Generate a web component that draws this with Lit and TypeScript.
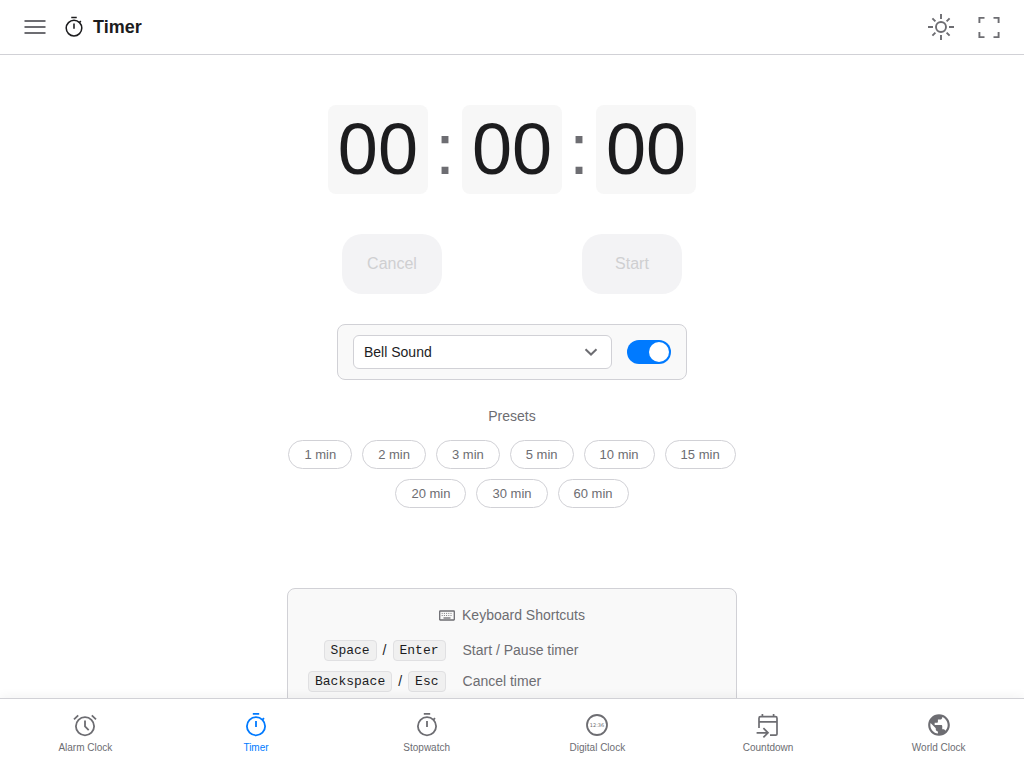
import { LitElement, html, css, svg } from "lit";
import { customElement, state } from "lit/decorators.js";
import { classMap } from "lit/directives/class-map.js";

const stopwatchIcon = svg`
  <g fill="none" stroke="currentColor" stroke-width="1.8">
    <circle cx="14" cy="15.3" r="9.1"></circle>
    <path d="M10.8 2.9h6.4M14 10v6M20.3 8.8l1.7-1.7"></path>
  </g>`;

const alarmIcon = svg`
  <g fill="none" stroke="currentColor" stroke-width="1.8">
    <circle cx="14" cy="15.2" r="9.1"></circle>
    <path d="M14 9.6v5.8l3.7 3.7M3 8.3l4.2-4M25 8.3l-4.2-4"></path>
  </g>`;

const digitalIcon = svg`
  <circle cx="14" cy="14" r="10" fill="none" stroke="currentColor" stroke-width="1.8"></circle>
  <text class="tiny" x="14" y="16" text-anchor="middle" fill="currentColor">12:36</text>`;

const countdownIcon = svg`
  <g fill="none" stroke="currentColor" stroke-width="1.7">
    <path d="M5 17V7.2q0-1.5 1.5-1.5h15q1.5 0 1.5 1.5V23q0 1.2-1.2 1.2H16M5 10.8h18M8.4 3v3M19.6 3v3M2.6 21.8h11.2M9.4 17.2l4.6 4.6-4.6 4.6"></path>
  </g>`;

const worldIcon = svg`
  <path fill="currentColor" transform="translate(1 1) scale(1.083)" d="M12 2C6.48 2 2 6.48 2 12s4.48 10 10 10 10-4.48 10-10S17.52 2 12 2zm-1 17.93c-3.95-.49-7-3.85-7-7.93 0-.62.08-1.21.21-1.79L9 15v1c0 1.1.9 2 2 2v1.93zm6.9-2.54c-.26-.81-1-1.39-1.9-1.39h-1v-3c0-.55-.45-1-1-1H8v-2h2c.55 0 1-.45 1-1V7h2c1.1 0 2-.9 2-2v-.41c2.93 1.19 5 4.06 5 7.41 0 2.08-.8 3.97-2.1 5.39z"></path>`;

const tabs = [
  { label: "Alarm Clock", icon: alarmIcon },
  { label: "Timer", icon: stopwatchIcon },
  { label: "Stopwatch", icon: stopwatchIcon },
  { label: "Digital Clock", icon: digitalIcon },
  { label: "Countdown", icon: countdownIcon },
  { label: "World Clock", icon: worldIcon },
];

const presets = [1, 2, 3, 5, 10, 15, 20, 30, 60];

@customElement("app-root")
export class AppRoot extends LitElement {
  @state() private seconds = 0;

  static styles = css`
    :host {
      display: flex;
      flex-direction: column;
      height: 100vh;
      background: #fff;
      color: #1c1c1e;
      font-family: "Liberation Sans", Arial, sans-serif;
      font-size: 14px;
    }
    * { box-sizing: border-box; }
    svg { display: block; }
    button, select { font-family: inherit; }
    header {
      display: flex;
      align-items: center;
      justify-content: space-between;
      height: 55px;
      flex: none;
      padding: 0 20px;
      border-bottom: 1px solid #d1d1d6;
    }
    .group { display: flex; align-items: center; gap: 12px; }
    .tools { gap: 18px; }
    .icon-button {
      border: 0;
      padding: 0;
      background: none;
      color: #6d6d72;
      cursor: pointer;
    }
    .title {
      display: flex;
      align-items: center;
      gap: 7px;
      margin: 0;
      font-size: 18px;
      line-height: 24px;
    }
    main {
      flex: 1;
      min-height: 0;
      overflow-y: auto;
      scrollbar-width: none;
      display: flex;
      flex-direction: column;
      align-items: center;
      padding: 50px 20px 40px;
    }
    main > * { flex: none; }
    .display {
      display: flex;
      font-size: 72px;
      line-height: 79px;
    }
    .digits {
      padding: 5px 10px;
      border-radius: 8px;
      background: #f7f7f7;
    }
    .colon { padding: 5px 7px; color: #6d6d72; }
    .actions { display: flex; gap: 140px; margin-top: 40px; }
    .action {
      width: 100px;
      height: 60px;
      border: 0;
      border-radius: 20px;
      background: #f3f3f5;
      color: #cfcfd1;
      font-size: 16px;
    }
    .sound {
      display: flex;
      align-items: center;
      gap: 15px;
      width: 100%;
      max-width: 350px;
      margin-top: 30px;
      padding: 10px 15px;
      border: 1px solid #d1d1d6;
      border-radius: 8px;
      background: #f9f9f9;
    }
    .select-box { flex: 1; display: grid; align-items: center; }
    .select-box > * { grid-area: 1 / 1; }
    .select {
      width: 100%;
      height: 34px;
      appearance: none;
      padding: 0 10px;
      border: 1px solid #d1d1d6;
      border-radius: 6px;
      background: #fff;
      color: #1c1c1e;
      font-size: 14px;
    }
    .chevron {
      justify-self: end;
      margin-right: 14px;
      color: #6d6d72;
      pointer-events: none;
    }
    .switch {
      appearance: none;
      width: 44px;
      height: 24px;
      margin: 0;
      padding: 2px;
      border-radius: 12px;
      background: #d1d1d6;
      cursor: pointer;
    }
    .switch::before {
      content: "";
      display: block;
      width: 20px;
      height: 20px;
      border-radius: 50%;
      background: #fff;
    }
    .switch:checked { background: #007aff; }
    .switch:checked::before { margin-left: 20px; }
    .section-title {
      margin: 0;
      color: #6d6d72;
      font-size: 14px;
      font-weight: 400;
      line-height: 20px;
      text-align: center;
    }
    .presets { margin-top: 26px; max-width: 450px; }
    .chips {
      display: flex;
      flex-wrap: wrap;
      justify-content: center;
      gap: 10px;
      margin-top: 14px;
    }
    .chip {
      height: 29px;
      padding: 0 15px;
      border: 1px solid #d1d1d6;
      border-radius: 15px;
      background: #fff;
      color: #6d6d72;
      font-size: 13px;
      cursor: pointer;
    }
    .shortcuts {
      width: 100%;
      max-width: 450px;
      margin-top: 80px;
      padding: 16px 20px 20px;
      border: 1px solid #d1d1d6;
      border-radius: 8px;
      background: #f9f9f9;
    }
    .with-icon {
      display: flex;
      align-items: center;
      justify-content: center;
      gap: 7px;
    }
    .keys {
      display: grid;
      grid-template-columns: max-content 1fr;
      gap: 10px 15px;
      margin: 15px 0 0;
      line-height: 21px;
    }
    .keys dt { text-align: right; display: flex; justify-content: flex-end; gap: 6px; padding-right: 2px; }
    .keys dd { margin: 0; color: #6d6d72; line-height: 20px; }
    .slash { line-height: 20px; }
    kbd {
      padding: 0 6px;
      border: 1px solid #e0e0e2;
      border-radius: 4px;
      background: #f0f0f0;
      font-family: "Liberation Mono", monospace;
      font-size: 13px;
      line-height: 19px;
    }
    nav {
      display: flex;
      flex: none;
      height: 70px;
      border-top: 1px solid #d1d1d6;
      background: #fff;
      box-shadow: 0 -2px 10px rgba(0, 0, 0, 0.05);
      z-index: 1;
    }
    .tab {
      flex: 1;
      display: flex;
      flex-direction: column;
      align-items: center;
      padding-top: 12px;
      gap: 3px;
      color: #6d6d72;
      font-size: 10px;
      line-height: 12px;
      text-decoration: none;
    }
    .tab.active { color: #007aff; }
    .tiny { font: 5px "DejaVu Sans", sans-serif; }
  `;

  private part(value: number) {
    return String(value).padStart(2, "0");
  }

  render() {
    const s = this.seconds;
    const idle = s === 0;
    return html`
      <header>
        <div class="group">
          <button class="icon-button" aria-label="Menu">
            <svg width="30" height="30" viewBox="0 0 30 30" fill="none" stroke="currentColor" stroke-width="1.8">
              <path d="M4.5 9h21M4.5 15h21M4.5 21h21"></path>
            </svg>
          </button>
          <h1 class="title">
            <svg width="24" height="24" viewBox="0 0 28 28">${stopwatchIcon}</svg>
            Timer
          </h1>
        </div>
        <div class="group tools">
          <button class="icon-button" aria-label="Toggle theme">
            <svg width="30" height="30" viewBox="0 0 30 30" fill="none" stroke="currentColor" stroke-width="1.9">
              <circle cx="15" cy="15" r="5"></circle>
              <path d="M15 2v5M15 23v5M2 15h5M23 15h5M6.4 6.4l3 3M20.6 20.6l3 3M6.4 23.6l3-3M20.6 9.4l3-3"></path>
            </svg>
          </button>
          <button class="icon-button" aria-label="Full screen">
            <svg width="30" height="30" viewBox="0 0 30 30" fill="none" stroke="currentColor" stroke-width="1.9">
              <path d="M5.400 11V5.900h5.100M19.500 5.900h5.100V11M24.600 20v5.100h-5.100M10.500 25.100H5.400V20"></path>
            </svg>
          </button>
        </div>
      </header>
      <main>
        <div class="display" role="timer">
          <span class="digits">${this.part(Math.floor(s / 3600))}</span>
          <span class="colon">:</span>
          <span class="digits">${this.part(Math.floor(s / 60) % 60)}</span>
          <span class="colon">:</span>
          <span class="digits">${this.part(s % 60)}</span>
        </div>
        <div class="actions">
          <button class="action" ?disabled=${idle} @click=${() => (this.seconds = 0)}>Cancel</button>
          <button class="action" ?disabled=${idle}>Start</button>
        </div>
        <div class="sound">
          <div class="select-box">
            <select class="select" aria-label="Sound"><option>Bell Sound</option></select>
            <svg class="chevron" width="14" height="14" viewBox="0 0 14 14" fill="none" stroke="currentColor" stroke-width="2">
              <path d="M1.500 4.300l5.500 5.200 5.500-5.200"></path>
            </svg>
          </div>
          <input class="switch" type="checkbox" aria-label="Sound enabled" checked />
        </div>
        <section class="presets">
          <h2 class="section-title">Presets</h2>
          <div class="chips">
            ${presets.map((m) => html`<button class="chip" @click=${() => (this.seconds = m * 60)}>${m} min</button>`)}
          </div>
        </section>
        <section class="shortcuts">
          <h2 class="section-title with-icon">
            <svg width="16" height="16" viewBox="0 0 16 16" fill="none" stroke="currentColor">
              <rect x="0.700" y="4" width="14.600" height="9" rx=".5" stroke-width="1.300"></rect>
              <path d="M2.700 6.400h10.700M2.700 8.500h10.700" stroke-dasharray="1 1.200" stroke-width=".9"></path>
              <path d="M4.500 11h7" stroke-width="1.300"></path>
            </svg>
            Keyboard Shortcuts
          </h2>
          <dl class="keys">
            <dt><kbd>Space</kbd><span class="slash">/</span><kbd>Enter</kbd></dt>
            <dd>Start / Pause timer</dd>
            <dt><kbd>Backspace</kbd><span class="slash">/</span><kbd>Esc</kbd></dt>
            <dd>Cancel timer</dd>
          </dl>
        </section>
      </main>
      <nav>
        ${tabs.map(
          (t) => html`<a href="#" class=${classMap({ tab: true, active: t.label === "Timer" })}>
            <svg width="28" height="28" viewBox="0 0 28 28">${t.icon}</svg>${t.label}</a>`
        )}
      </nav>
    `;
  }
}
